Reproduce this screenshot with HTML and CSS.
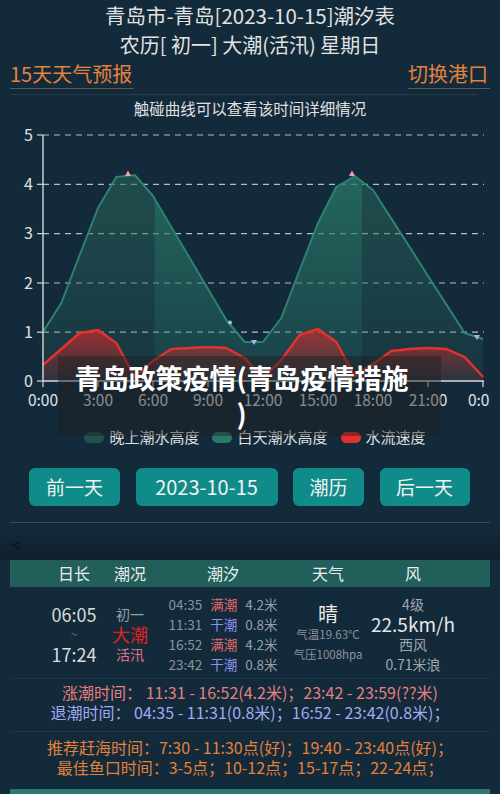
FILE: index.html
```html
<!DOCTYPE html>
<html lang="zh">
<head>
<meta charset="utf-8">
<title>青岛潮汐表</title>
<link rel="stylesheet" href="styles.css">
</head>
<body>
<div class="page">
  <header class="head">
    <div class="title title-main">青岛市-青岛[2023-10-15]潮汐表</div>
    <div class="title title-sub">农历[ 初一] 大潮(活汛) 星期日</div>
  </header>
  <nav class="links">
    <a class="link">15天天气预报</a>
    <a class="link">切换港口</a>
  </nav>
  <div class="sep sep-top"></div>
  <div class="hint">触碰曲线可以查看该时间详细情况</div>

  <section class="chart-wrap">
    <svg class="chart" width="490" height="300" viewBox="0 121 490 300" xmlns="http://www.w3.org/2000/svg">
      <defs>
        <linearGradient id="gNight" x1="0" y1="175" x2="0" y2="381" gradientUnits="userSpaceOnUse">
          <stop offset="0" stop-color="rgb(42,105,90)" stop-opacity="0.55"/>
          <stop offset="1" stop-color="rgb(42,105,90)" stop-opacity="0.18"/>
        </linearGradient>
        <linearGradient id="gDay" x1="0" y1="175" x2="0" y2="381" gradientUnits="userSpaceOnUse">
          <stop offset="0" stop-color="rgb(40,120,103)" stop-opacity="0.78"/>
          <stop offset="1" stop-color="rgb(40,120,103)" stop-opacity="0.28"/>
        </linearGradient>
        <linearGradient id="gRed" x1="0" y1="329" x2="0" y2="381" gradientUnits="userSpaceOnUse">
          <stop offset="0" stop-color="rgb(215,40,40)" stop-opacity="0.7"/>
          <stop offset="1" stop-color="rgb(215,40,40)" stop-opacity="0.08"/>
        </linearGradient>
        <clipPath id="cNight">
          <rect x="0" y="100" width="154.5" height="300"/>
          <rect x="362" y="100" width="140" height="300"/>
        </clipPath>
        <clipPath id="cDay">
          <rect x="154.5" y="100" width="207.5" height="300"/>
        </clipPath>
      </defs>

      <g class="grid">
        <line x1="43" y1="135" x2="484" y2="135"/>
        <line x1="43" y1="184.3" x2="484" y2="184.3"/>
        <line x1="43" y1="233.6" x2="484" y2="233.6"/>
        <line x1="43" y1="283" x2="484" y2="283"/>
        <line x1="43" y1="332.2" x2="484" y2="332.2"/>
      </g>
      <g class="ticks">
        <line x1="37" y1="135" x2="43" y2="135"/>
        <line x1="37" y1="184.3" x2="43" y2="184.3"/>
        <line x1="37" y1="233.6" x2="43" y2="233.6"/>
        <line x1="37" y1="283" x2="43" y2="283"/>
        <line x1="37" y1="332.2" x2="43" y2="332.2"/>
        <line x1="37" y1="381" x2="43" y2="381"/>
        <line x1="43" y1="381" x2="43" y2="387"/>
        <line x1="98" y1="381" x2="98" y2="387"/>
        <line x1="153" y1="381" x2="153" y2="387"/>
        <line x1="208" y1="381" x2="208" y2="387"/>
        <line x1="263" y1="381" x2="263" y2="387"/>
        <line x1="318" y1="381" x2="318" y2="387"/>
        <line x1="373" y1="381" x2="373" y2="387"/>
        <line x1="428" y1="381" x2="428" y2="387"/>
        <line x1="483" y1="381" x2="483" y2="387"/>
      </g>

      <path class="area" clip-path="url(#cNight)" fill="url(#gNight)" d="M43,381 L43,332 L61.3,303 L79.7,255 L98,208 L116.3,177 L134.7,175 L153,196 L171.3,227 L189.7,258 L208,289 L226.3,320 L244.7,342 L263,342 L281.3,318 L299.7,270 L318,223 L336.3,187 L354.7,176 L373,190 L391.3,218.6 L409.7,247 L428,276 L446.3,304.4 L464.7,333 L483,339 L483,381 Z"/>
      <path class="area" clip-path="url(#cDay)" fill="url(#gDay)" d="M43,381 L43,332 L61.3,303 L79.7,255 L98,208 L116.3,177 L134.7,175 L153,196 L171.3,227 L189.7,258 L208,289 L226.3,320 L244.7,342 L263,342 L281.3,318 L299.7,270 L318,223 L336.3,187 L354.7,176 L373,190 L391.3,218.6 L409.7,247 L428,276 L446.3,304.4 L464.7,333 L483,339 L483,381 Z"/>
      <polyline class="tide-line" points="43,332 61.3,303 79.7,255 98,208 116.3,177 134.7,175 153,196 171.3,227 189.7,258 208,289 226.3,320 244.7,342 263,342 281.3,318 299.7,270 318,223 336.3,187 354.7,176 373,190 391.3,218.6 409.7,247 428,276 446.3,304.4 464.7,333 483,339"/>

      <path fill="url(#gRed)" d="M43,381 L43,365 L61.3,349 L79.7,333 L98,330 L116.3,343 L134.7,377 L153,361 L171.3,349 L189.7,348 L208,347 L226.3,348 L244.7,358 L263,378 L281.3,360 L299.7,335 L318,329 L336.3,342 L354.7,376 L373,364 L391.3,351 L409.7,349 L428,348 L446.3,349 L464.7,357 L483,377 L483,381 Z"/>
      <polyline class="red-line" points="43,365 61.3,349 79.7,333 98,330 116.3,343 134.7,377 153,361 171.3,349 189.7,348 208,347 226.3,348 244.7,358 263,378 281.3,360 299.7,335 318,329 336.3,342 354.7,376 373,364 391.3,351 409.7,349 428,348 446.3,349 464.7,357 483,377"/>

      <line class="axis" x1="43" y1="135" x2="43" y2="381"/>
      <line class="axis" x1="43" y1="381" x2="484" y2="381"/>

      <polygon class="mk-up" points="125,176 128,170.5 131,176"/>
      <polygon class="mk-up" points="349,176 352,170.5 355,176"/>
      <polygon class="mk-down" points="251,340 257,340 254,345"/>
      <polygon class="mk-down" points="474,335 480,335 477,340"/>
      <circle class="mk-dot" cx="230" cy="322.5" r="2"/>

      <g class="ylab">
        <text x="33" y="141">5</text>
        <text x="33" y="190">4</text>
        <text x="33" y="239">3</text>
        <text x="33" y="289">2</text>
        <text x="33" y="338">1</text>
        <text x="33" y="387">0</text>
      </g>
      <g class="xlab">
        <text x="43" y="406">0:00</text>
        <text x="98" y="406">3:00</text>
        <text x="153" y="406">6:00</text>
        <text x="208" y="406">9:00</text>
        <text x="263" y="406">12:00</text>
        <text x="318" y="406">15:00</text>
        <text x="373" y="406">18:00</text>
        <text x="428" y="406">21:00</text>
        <text x="483" y="406">0:00</text>
      </g>
    </svg>

    <div class="legend">
      <span class="lg-item"><i class="pill pill-night"></i>晚上潮水高度</span>
      <span class="lg-item"><i class="pill pill-day"></i>白天潮水高度</span>
      <span class="lg-item"><i class="pill pill-red"></i>水流速度</span>
    </div>

    <div class="promo">青岛政策疫情(青岛疫情措施)</div>
  </section>

  <div class="buttons">
    <span class="btn btn-prev">前一天</span>
    <span class="btn btn-date">2023-10-15</span>
    <span class="btn btn-cal">潮历</span>
    <span class="btn btn-next">后一天</span>
  </div>

  <div class="sep sep-mid"></div>
  <div class="back">&lt;</div>

  <div class="table">
    <div class="row thead">
      <div class="cell">日长</div>
      <div class="cell">潮况</div>
      <div class="cell">潮汐</div>
      <div class="cell">天气</div>
      <div class="cell">风</div>
    </div>
    <div class="row tbody">
      <div class="cell stack">
        <div class="sun">06:05</div>
        <div class="tilde">~</div>
        <div class="sun">17:24</div>
      </div>
      <div class="cell stack">
        <div class="lunar">初一</div>
        <div class="big-tide">大潮</div>
        <div class="flood">活汛</div>
      </div>
      <div class="cell stack">
        <div class="tide-row"><span class="tm">04:35</span><span class="hi">满潮</span><span class="ht">4.2米</span></div>
        <div class="tide-row"><span class="tm">11:31</span><span class="lo">干潮</span><span class="ht">0.8米</span></div>
        <div class="tide-row"><span class="tm">16:52</span><span class="hi">满潮</span><span class="ht">4.2米</span></div>
        <div class="tide-row"><span class="tm">23:42</span><span class="lo">干潮</span><span class="ht">0.8米</span></div>
      </div>
      <div class="cell stack">
        <div class="wx">晴</div>
        <div class="wx-small">气温19.63°C</div>
        <div class="wx-small">气压1008hpa</div>
      </div>
      <div class="cell stack">
        <div class="wind-s">4级</div>
        <div class="wind-big">22.5km/h</div>
        <div class="wind-s">西风</div>
        <div class="wind-s">0.71米浪</div>
      </div>
    </div>
  </div>

  <div class="sep sep-faint"></div>
  <div class="tides">
    <div class="rise">涨潮时间： 11:31 - 16:52(4.2米)；23:42 - 23:59(??米)</div>
    <div class="fall">退潮时间： 04:35 - 11:31(0.8米)；16:52 - 23:42(0.8米)；</div>
  </div>
  <div class="sep sep-faint sep-low"></div>
  <div class="sea">
    <div>推荐赶海时间：7:30 - 11:30点(好)；19:40 - 23:40点(好)；</div>
    <div>最佳鱼口时间：3-5点；10-12点；15-17点；22-24点；</div>
  </div>
  <div class="bottom-bar"></div>
</div>
</body>
</html>
```

FILE: styles.css
```css
html, body {
  margin: 0;
  padding: 0;
}

body {
  background: #132a3b;
  font-family: "Noto Sans CJK SC", "Noto Sans", sans-serif;
  color: #dedede;
  width: 500px;
  height: 794px;
  overflow: hidden;
}

.page {
  display: flex;
  flex-direction: column;
}

.head {
  display: flex;
  flex-direction: column;
}

.title {
  text-align: center;
  line-height: 30px;
  height: 30px;
  color: #e2e2e2;
  white-space: nowrap;
}

.title-main {
  font-size: 20.5px;
}

.title-sub {
  font-size: 20px;
}

.links {
  display: flex;
  justify-content: space-between;
  padding: 0 10px;
  height: 29px;
}

.link {
  font-size: 20px;
  line-height: 28px;
  color: #e5813b;
  border-bottom: 1px solid #5f5750;
  padding-right: 2px;
}

.sep {
  height: 1px;
}

.sep-top {
  margin: 5px 22px 0 10px;
  background: rgba(255, 255, 255, 0.09);
}

.hint {
  text-align: center;
  font-size: 15.5px;
  line-height: 26px;
  height: 26px;
  color: #e0e0e0;
}

.chart-wrap {
  position: relative;
  display: flex;
  flex-direction: column;
}

.chart {
  display: block;
  overflow: hidden;
}

.grid line {
  stroke: rgba(225, 225, 225, 0.8);
  stroke-width: 1.2;
  stroke-dasharray: 6 5;
}

.ticks line {
  stroke: #d8d8d8;
  stroke-width: 1.2;
}

.axis {
  stroke: #d8d8d8;
  stroke-width: 1.4;
}

.tide-line {
  fill: none;
  stroke: #2d8272;
  stroke-width: 2;
  stroke-linejoin: round;
}

.red-line {
  fill: none;
  stroke: #e8302c;
  stroke-width: 2.4;
  stroke-linejoin: round;
}

.mk-up {
  fill: #f0a3a3;
}

.mk-down {
  fill: #a9b2f4;
}

.mk-dot {
  fill: #8fd0c4;
}

.ylab text {
  fill: #e0e0e0;
  font-size: 16px;
  text-anchor: end;
  font-family: "Noto Sans CJK SC", "Noto Sans", sans-serif;
}

.xlab text {
  fill: #e0e0e0;
  font-size: 15.5px;
  text-anchor: middle;
  font-family: "Noto Sans CJK SC", "Noto Sans", sans-serif;
}

.legend {
  margin-top: 7px;
  height: 18px;
  display: flex;
  justify-content: center;
  align-items: center;
  gap: 13px;
  padding-left: 10px;
  font-size: 15px;
  line-height: 18px;
  color: #e0e0e0;
}

.lg-item {
  display: flex;
  align-items: center;
  gap: 5px;
}

.pill {
  display: block;
  width: 20px;
  height: 11px;
  border-radius: 6px;
}

.pill-night {
  background: #1f534e;
}

.pill-day {
  background: #27796a;
}

.pill-red {
  background: #e3302e;
}

.promo {
  position: absolute;
  left: 58px;
  top: 235px;
  width: 339px;
  height: 72px;
  padding: 4px 30px 4px 14px;
  background: rgba(30, 30, 30, 0.45);
  color: #ffffff;
  font-size: 27px;
  font-weight: 700;
  line-height: 36px;
  text-align: center;
  line-break: anywhere;
}

.buttons {
  margin-top: 22px;
  display: flex;
  padding-left: 29px;
  gap: 15.5px;
}

.btn {
  height: 38px;
  line-height: 38px;
  background: #0f8c89;
  color: #f2f2f2;
  font-size: 19px;
  border-radius: 6px;
  text-align: center;
}

.btn-prev {
  width: 91px;
}

.btn-date {
  width: 142px;
  font-size: 20px;
}

.btn-cal {
  width: 71px;
}

.btn-next {
  width: 90px;
}

.sep-mid {
  margin: 16px 10px 0 10px;
  background: rgba(255, 255, 255, 0.16);
}

.back {
  height: 23px;
  padding: 14px 0 0 12px;
  font-size: 15px;
  line-height: 16px;
  color: #0d0d0d;
  background: linear-gradient(to bottom, #142a3a, #0e1f2c);
}

.table {
  margin: 0 10px;
  display: flex;
  flex-direction: column;
}

.row {
  display: grid;
  grid-template-columns: 56px 56px 130px 80px 90px;
  padding-left: 36px;
}

.thead {
  background: #235f5a;
  height: 27px;
  line-height: 27px;
  font-size: 16px;
  color: #e8efee;
}

.cell {
  text-align: center;
  white-space: nowrap;
}

.tbody {
  margin-top: 7px;
  height: 80px;
  align-items: center;
}

.stack {
  display: flex;
  flex-direction: column;
  align-items: center;
  line-height: 20px;
}

.stack > div {
  height: 20px;
}

.sun {
  font-size: 18px;
  color: #dcdcdc;
}

.tilde {
  font-size: 12px;
  color: #6e7880;
}

.lunar {
  font-size: 14px;
  color: #9a9ea2;
}

.big-tide {
  font-size: 18px;
  color: #e2211f;
}

.flood {
  font-size: 14px;
  color: #e07388;
}

.tide-row {
  display: flex;
  gap: 8px;
  font-size: 13.5px;
}

.tm {
  color: #8c9298;
}

.hi {
  color: #e06868;
}

.lo {
  color: #8f8ff0;
}

.ht {
  color: #9a9ea2;
}

.wx {
  font-size: 20px;
  color: #ececec;
}

.wx-small {
  font-size: 11.5px;
  color: #8d949a;
}

.wind-s {
  font-size: 14px;
  color: #a2a6aa;
}

.wind-big {
  font-size: 19px;
  color: #e6e6e6;
}

.sep-faint {
  margin: 4px 10px 0 10px;
  background: rgba(255, 255, 255, 0.06);
}

.tides {
  margin-top: 3px;
  display: flex;
  flex-direction: column;
  align-items: center;
  font-size: 16px;
  line-height: 20px;
  white-space: pre;
}

.rise {
  color: #e38080;
}

.fall {
  color: #a2a9ee;
}

.sep-low {
  margin-top: 9px;
}

.sea {
  margin-top: 5px;
  display: flex;
  flex-direction: column;
  align-items: center;
  font-size: 16px;
  line-height: 20px;
  color: #e4803a;
  white-space: pre;
}

.bottom-bar {
  margin: 12px 10px 0 10px;
  height: 5px;
  background: #2a7870;
}
```
